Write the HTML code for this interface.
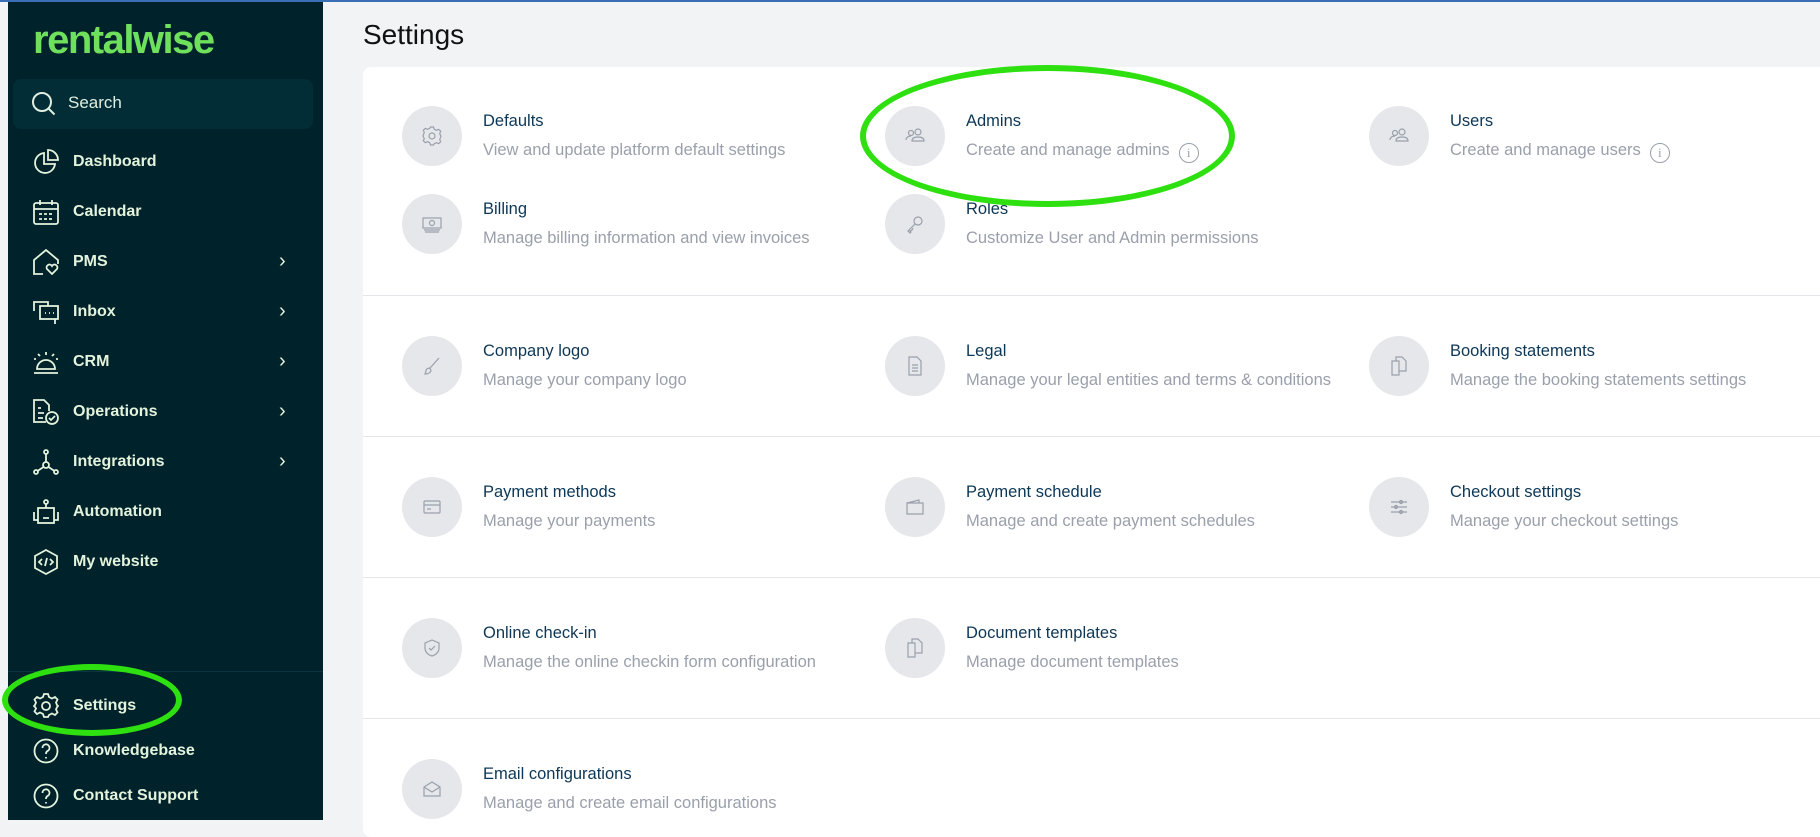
<!DOCTYPE html>
<html><head><meta charset="utf-8"><style>
*{margin:0;padding:0;box-sizing:border-box}
body{width:1820px;height:820px;overflow:hidden;background:#f2f3f5;font-family:"Liberation Sans",sans-serif;position:relative}
.top{position:absolute;left:0;top:0;width:1820px;height:2px;background:#3a6fb5;z-index:5}
.side{position:absolute;left:8px;top:0;width:315px;height:820px;background:#00222b}
.logo{position:absolute;left:33px;top:18px;color:#6fe05b;font-size:40px;font-weight:bold;letter-spacing:-1.5px}
.search{position:absolute;left:13px;top:79px;width:300px;height:50px;background:#022d36;border-radius:8px}
.search span{position:absolute;left:55px;top:14px;color:#dfeee0;font-size:17px}
.nav{position:absolute;left:33px;height:30px;width:270px;color:#e3f3dc;font-size:16px;font-weight:bold}
.nav svg{position:absolute;left:0;top:2px}
.nav span{position:absolute;left:40px;top:6px}
.nav .ch{position:absolute;left:246px;top:3px;font-weight:normal;font-size:20px}
.div{position:absolute;left:8px;top:671px;width:315px;height:1px;background:#0a3540}
.title{position:absolute;left:363px;top:19px;font-size:28px;color:#111}
.card{position:absolute;left:363px;top:67px;width:1470px;height:770px;background:#fff;border-radius:8px}
.hr{position:absolute;left:363px;width:1460px;height:1px;background:#e4e6ea}
.item{position:absolute;height:60px}
.item .c{position:absolute;left:0;top:0;width:60px;height:60px;border-radius:50%;background:#e5e7eb}
.item .c svg{position:absolute;left:20px;top:20px}
.item .t{position:absolute;left:81px;top:6px;font-size:16.5px;color:#0d3756;white-space:nowrap}
.item .d{position:absolute;left:81px;top:35px;font-size:16.5px;color:#9aa0ab;white-space:nowrap}
.info{display:inline-block;width:20px;height:20px;border:1.5px solid #9aa0ab;border-radius:50%;font-size:13px;text-align:center;line-height:17px;margin-left:9px;vertical-align:-2px;font-family:"Liberation Serif",serif}
.ell{position:absolute;border:6px solid #2ee00f;border-radius:50%}
</style></head><body>
<div class="top"></div>
<div class="side"></div>
<div class="logo">rentalwise</div>
<div class="search"><svg style="position:absolute;left:18px;top:12px" width="26" height="26" viewBox="0 0 26 26" fill="none" stroke="#dfeee0" stroke-width="2"><circle cx="11" cy="11" r="9"/><path d="M17.5 17.5l6 6"/></svg><span>Search</span></div>

<div class="nav" style="top:147px"><svg width="26" height="26" viewBox="0 0 26 26" fill="none" stroke="#e3f3dc" stroke-width="1.8"><path d="M11 4a10 10 0 1 0 11 11H11z"/><path d="M15 1v10h10A10 10 0 0 0 15 1z"/></svg><span>Dashboard</span></div>
<div class="nav" style="top:197px"><svg width="26" height="26" viewBox="0 0 26 26" fill="none" stroke="#e3f3dc" stroke-width="1.8"><rect x="1" y="4" width="24" height="21" rx="2"/><path d="M1 10h24M7 1v5M19 1v5M6 15h3M11 15h3M16 15h3M6 20h3M11 20h3M16 20h3"/></svg><span>Calendar</span></div>
<div class="nav" style="top:247px"><svg width="26" height="26" viewBox="0 0 26 26" fill="none" stroke="#e3f3dc" stroke-width="1.8"><path d="M10 25H1V11L13 1l12 10v4"/><path d="M19 25l-5-5a2.5 2.5 0 0 1 5-3 2.5 2.5 0 0 1 5 3z"/></svg><span>PMS</span><b class="ch">›</b></div>
<div class="nav" style="top:297px"><svg width="26" height="26" viewBox="0 0 26 26" fill="none" stroke="#e3f3dc" stroke-width="1.8"><path d="M1 12V3h14v4"/><rect x="7" y="7" width="18" height="13"/><path d="M22 20v5M12 14h1M16 14h1M20 14h1"/></svg><span>Inbox</span><b class="ch">›</b></div>
<div class="nav" style="top:347px"><svg width="26" height="26" viewBox="0 0 26 26" fill="none" stroke="#e3f3dc" stroke-width="1.8"><path d="M4 20a9 9 0 0 1 18 0zM1 24h24M13 3v3M5 5l2 2M21 5l-2 2M1 10h2M23 10h2"/></svg><span>CRM</span><b class="ch">›</b></div>
<div class="nav" style="top:397px"><svg width="26" height="26" viewBox="0 0 26 26" fill="none" stroke="#e3f3dc" stroke-width="1.8"><path d="M13 23H1V1h10l5 5v6"/><path d="M5 9h3M5 14h6M5 19h5"/><circle cx="19" cy="19" r="6"/><path d="M16 19l2 2 4-4"/></svg><span>Operations</span><b class="ch">›</b></div>
<div class="nav" style="top:447px"><svg width="26" height="26" viewBox="0 0 26 26" fill="none" stroke="#e3f3dc" stroke-width="1.8"><circle cx="13" cy="3" r="2"/><circle cx="13" cy="16" r="3"/><circle cx="3" cy="23" r="2"/><circle cx="23" cy="23" r="2"/><path d="M13 5v8M10.5 18l-6 4M15.5 18l6 4"/></svg><span>Integrations</span><b class="ch">›</b></div>
<div class="nav" style="top:497px"><svg width="26" height="26" viewBox="0 0 26 26" fill="none" stroke="#e3f3dc" stroke-width="1.8"><circle cx="13" cy="3" r="2"/><path d="M13 5v4"/><rect x="5" y="9" width="16" height="15"/><path d="M1 13v8h4M25 13v8h-4M10 19h6"/></svg><span>Automation</span></div>
<div class="nav" style="top:547px"><svg width="26" height="26" viewBox="0 0 26 26" fill="none" stroke="#e3f3dc" stroke-width="1.8"><path d="M13 1l11 6v12l-11 6-11-6V7z"/><path d="M9 10l-3 3 3 3M17 10l3 3-3 3M14 9l-2 8"/></svg><span>My website</span></div>
<div class="div"></div>
<div class="nav" style="top:691px"><svg width="26" height="26" viewBox="0 0 26 26" fill="none" stroke="#e3f3dc" stroke-width="1.8"><circle cx="13" cy="13" r="4"/><path d="M11 1h4l1 3 3 1.5 3-1.5 2.5 2.5-1.5 3L24 12l1 1v0l-1 1-1 2.5 1.5 3-2.5 2.5-3-1.5-3 1.5-1 2h-4l-1-3-3-1.5-3 1.5-2.5-2.5 1.5-3L2 14l-1-1 1-1 1-2.5-1.5-3L4 4l3 1.5L10 4z"/></svg><span>Settings</span></div>
<div class="nav" style="top:736px"><svg width="26" height="26" viewBox="0 0 26 26" fill="none" stroke="#e3f3dc" stroke-width="1.8"><circle cx="13" cy="13" r="11.5"/><path d="M9.5 10a3.5 3.5 0 1 1 5 3c-1 .6-1.5 1.2-1.5 3M13 19v1.5"/></svg><span>Knowledgebase</span></div>
<div class="nav" style="top:781px"><svg width="26" height="26" viewBox="0 0 26 26" fill="none" stroke="#e3f3dc" stroke-width="1.8"><circle cx="13" cy="13" r="11.5"/><path d="M9.5 10a3.5 3.5 0 1 1 5 3c-1 .6-1.5 1.2-1.5 3M13 19v1.5"/></svg><span>Contact Support</span></div>

<div class="title">Settings</div>
<div class="card"></div>
<div class="hr" style="top:295px"></div>
<div class="hr" style="top:436px"></div>
<div class="hr" style="top:577px"></div>
<div class="hr" style="top:718px"></div>

<div class="item" style="left:402px;top:106px"><div class="c"><svg width="20" height="20" viewBox="0 0 20 20" fill="none" stroke="#9aa0ab" stroke-width="1.2"><circle cx="10" cy="10" r="3"/><path d="M8.5 1h3l.8 2.3 2.2 1 2.2-1 2 2-1 2.2.9 2.2L19 10l-.4 1.3-.9 2.2 1 2.2-2 2-2.2-1-2.2 1L11.5 19h-3l-.8-2.3-2.2-1-2.2 1-2-2 1-2.2L1.4 11 1 10l.4-1.3.9-2.2-1-2.2 2-2 2.2 1 2.2-1z"/></svg></div><div class="t">Defaults</div><div class="d">View and update platform default settings</div></div>
<div class="item" style="left:885px;top:106px"><div class="c"><svg width="20" height="20" viewBox="0 0 20 20" fill="none" stroke="#9aa0ab" stroke-width="1.2"><circle cx="6" cy="7" r="2.5"/><circle cx="13" cy="6" r="3"/><path d="M1 14c0-3 3-4 5-4M7 15c0-3 3-4 6-4s6 1 6 4z"/></svg></div><div class="t">Admins</div><div class="d">Create and manage admins<span class="info">i</span></div></div>
<div class="item" style="left:1369px;top:106px"><div class="c"><svg width="20" height="20" viewBox="0 0 20 20" fill="none" stroke="#9aa0ab" stroke-width="1.2"><circle cx="6" cy="7" r="2.5"/><circle cx="13" cy="6" r="3"/><path d="M1 14c0-3 3-4 5-4M7 15c0-3 3-4 6-4s6 1 6 4z"/></svg></div><div class="t">Users</div><div class="d">Create and manage users<span class="info">i</span></div></div>

<div class="item" style="left:402px;top:194px"><div class="c"><svg width="20" height="20" viewBox="0 0 20 20" fill="none" stroke="#9aa0ab" stroke-width="1.2"><rect x="1" y="4" width="18" height="10"/><circle cx="10" cy="9" r="2.5"/><path d="M2 16h16M3 18h14"/></svg></div><div class="t">Billing</div><div class="d">Manage billing information and view invoices</div></div>
<div class="item" style="left:885px;top:194px"><div class="c"><svg width="20" height="20" viewBox="0 0 20 20" fill="none" stroke="#9aa0ab" stroke-width="1.2"><circle cx="13" cy="7" r="4"/><path d="M10 10l-7 7 2 2 1-1-1-1 2-1 1-2"/></svg></div><div class="t">Roles</div><div class="d">Customize User and Admin permissions</div></div>

<div class="item" style="left:402px;top:336px"><div class="c"><svg width="20" height="20" viewBox="0 0 20 20" fill="none" stroke="#9aa0ab" stroke-width="1.2"><path d="M17 2L8 12M8 12c-2 0-4 1-4 3l-1 3c3 0 5-1 6-3z"/></svg></div><div class="t">Company logo</div><div class="d">Manage your company logo</div></div>
<div class="item" style="left:885px;top:336px"><div class="c"><svg width="20" height="20" viewBox="0 0 20 20" fill="none" stroke="#9aa0ab" stroke-width="1.2"><path d="M4 1h8l4 4v14H4zM7 9h6M7 12h6M7 15h6"/></svg></div><div class="t">Legal</div><div class="d">Manage your legal entities and terms &amp; conditions</div></div>
<div class="item" style="left:1369px;top:336px"><div class="c"><svg width="20" height="20" viewBox="0 0 20 20" fill="none" stroke="#9aa0ab" stroke-width="1.2"><path d="M3 5h7v14H3zM7 5V1h6l4 4v10h-7"/></svg></div><div class="t">Booking statements</div><div class="d">Manage the booking statements settings</div></div>

<div class="item" style="left:402px;top:477px"><div class="c"><svg width="20" height="20" viewBox="0 0 20 20" fill="none" stroke="#9aa0ab" stroke-width="1.2"><rect x="2" y="4" width="16" height="12" rx="1"/><path d="M2 8h16M5 12h4"/></svg></div><div class="t">Payment methods</div><div class="d">Manage your payments</div></div>
<div class="item" style="left:885px;top:477px"><div class="c"><svg width="20" height="20" viewBox="0 0 20 20" fill="none" stroke="#9aa0ab" stroke-width="1.2"><path d="M2 6h16v11H2zM2 6l12-3v3"/></svg></div><div class="t">Payment schedule</div><div class="d">Manage and create payment schedules</div></div>
<div class="item" style="left:1369px;top:477px"><div class="c"><svg width="20" height="20" viewBox="0 0 20 20" fill="none" stroke="#9aa0ab" stroke-width="1.2"><path d="M2 5h16M2 10h16M2 15h16"/><circle cx="12" cy="5" r="1.5"/><circle cx="7" cy="10" r="1.5"/><circle cx="12" cy="15" r="1.5"/></svg></div><div class="t">Checkout settings</div><div class="d">Manage your checkout settings</div></div>

<div class="item" style="left:402px;top:618px"><div class="c"><svg width="20" height="20" viewBox="0 0 20 20" fill="none" stroke="#9aa0ab" stroke-width="1.2"><path d="M10 2l7 3v5c0 4-3 7-7 8-4-1-7-4-7-8V5z"/><path d="M7 10l2 2 4-4"/></svg></div><div class="t">Online check-in</div><div class="d">Manage the online checkin form configuration</div></div>
<div class="item" style="left:885px;top:618px"><div class="c"><svg width="20" height="20" viewBox="0 0 20 20" fill="none" stroke="#9aa0ab" stroke-width="1.2"><path d="M3 5h7v14H3zM7 5V1h6l4 4v10h-7"/></svg></div><div class="t">Document templates</div><div class="d">Manage document templates</div></div>

<div class="item" style="left:402px;top:759px"><div class="c"><svg width="20" height="20" viewBox="0 0 20 20" fill="none" stroke="#9aa0ab" stroke-width="1.2"><path d="M2 8l8-5 8 5v9H2zM2 8l8 5 8-5"/></svg></div><div class="t">Email configurations</div><div class="d">Manage and create email configurations</div></div>

<div class="ell" style="left:860px;top:65px;width:375px;height:142px"></div>
<div class="ell" style="left:2px;top:664px;width:180px;height:72px"></div>
</body></html>
